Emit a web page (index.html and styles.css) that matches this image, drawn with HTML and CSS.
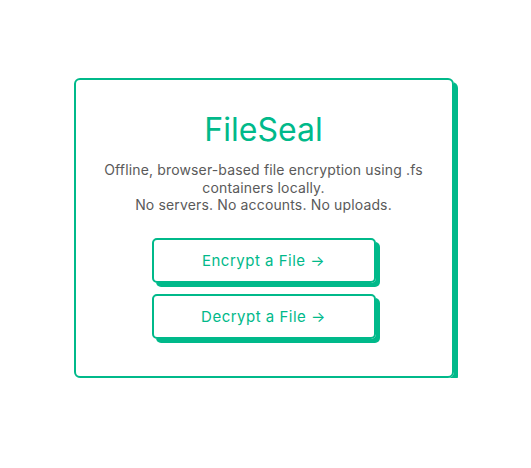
FILE: index.html
```html
<!DOCTYPE html>
<html lang="en">
<head>
    <meta charset="UTF-8">
    <title>FileSeal</title>
    <link rel="stylesheet" href="styles.css">
</head>
<body>
    <div class="page">
        <div class="card">
            <h1>FileSeal</h1>
            <p class="intro">
                Offline, browser-based file encryption using .fs containers locally.<br>
                No servers. No accounts. No uploads.
            </p>
            <div class="actions">
                <a class="btn" href="#encrypt">Encrypt a File →</a>
                <a class="btn" href="#decrypt">Decrypt a File →</a>
            </div>
        </div>
    </div>
</body>
</html>
```

FILE: styles.css
```css
body {
    margin: 0;
    font-family: Inter, "Noto Sans", sans-serif;
    background: #fff;
}
.page {
    display: flex;
    justify-content: center;
    padding: 78px 4px 0 0;
}
.card {
    box-sizing: border-box;
    width: 380px;
    height: 300px;
    padding: 30px 24px 0;
    border: 2px solid #00b98a;
    border-radius: 6px;
    box-shadow: 4px 4px 0 #00b98a;
    text-align: center;
}
h1 {
    margin: 0;
    font-size: 32px;
    font-weight: 400;
    color: #00b98a;
}
.intro {
    margin: 12px 0 24px;
    font-size: 14px;
    line-height: 17.5px;
    letter-spacing: 0.15px;
    color: #5a5a5a;
}
.actions {
    display: flex;
    flex-direction: column;
    align-items: center;
    gap: 11px;
}
.btn {
    box-sizing: border-box;
    display: block;
    width: 224px;
    padding: 11px 0;
    border: 2px solid #00b98a;
    border-radius: 5px;
    box-shadow: 4px 4px 0 #00b98a;
    color: #00b98a;
    font-size: 15px;
    letter-spacing: 0.5px;
    text-decoration: none;
}
```
